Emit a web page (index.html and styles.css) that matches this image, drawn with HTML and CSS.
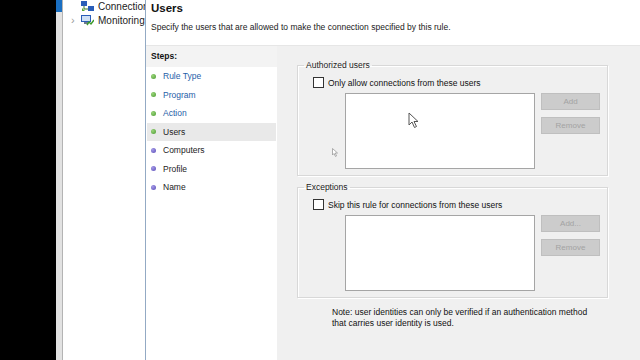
FILE: index.html
```html
<!DOCTYPE html>
<html lang="en">
<head>
  <meta charset="UTF-8" />
  <title>New Inbound Rule Wizard - Users</title>
  <link rel="stylesheet" href="styles.css">
</head>
<body>
  <div class="screen">
    <div class="black"></div>
    <div class="strip"><div class="strip-top"></div></div>

    <!-- MMC tree behind the wizard -->
    <div class="tree">
      <div class="tree-row">
        <span class="chev"></span>
        <svg class="tree-icon" width="13" height="11" viewBox="0 0 13 11">
          <rect x="0" y="0" width="6" height="5" fill="#2a5db8"/>
          <rect x="7" y="5" width="6" height="5" fill="#2a5db8"/>
          <path d="M3 5 V8 H7" stroke="#3a7a2a" stroke-width="1" fill="none"/>
          <path d="M1 7 L4 10 L1 10 Z" fill="#56a832"/>
        </svg>
        <span class="tree-label">Connection</span>
      </div>
      <div class="tree-row">
        <span class="chev">&#x203A;</span>
        <svg class="tree-icon" width="13" height="11" viewBox="0 0 13 11">
          <rect x="0" y="0" width="10" height="7" fill="#2a5db8"/>
          <rect x="1" y="1" width="8" height="5" fill="#cfe0f5"/>
          <rect x="3" y="7" width="4" height="2" fill="#6b7a8c"/>
          <path d="M6 10 L8 7 L10 9 L13 5" stroke="#3b9a2a" stroke-width="1.4" fill="none"/>
        </svg>
        <span class="tree-label">Monitoring</span>
      </div>
    </div>

    <!-- Wizard dialog -->
    <div class="dialog">
      <div class="dlg-head">
        <h1>Users</h1>
        <p>Specify the users that are allowed to make the connection specified by this rule.</p>
      </div>
      <div class="dlg-body">
        <div class="steps">
          <div class="steps-title">Steps:</div>
          <ul class="step-list">
            <li class="done"><span class="dot green"></span>Rule Type</li>
            <li class="done"><span class="dot green"></span>Program</li>
            <li class="done"><span class="dot green"></span>Action</li>
            <li class="current"><span class="dot green"></span>Users</li>
            <li><span class="dot purple"></span>Computers</li>
            <li><span class="dot purple"></span>Profile</li>
            <li><span class="dot purple"></span>Name</li>
          </ul>
        </div>

        <div class="content">
          <fieldset class="group">
            <legend>Authorized users</legend>
            <label class="check-row"><span class="box"></span>Only allow connections from these users</label>
            <div class="list-row">
              <div class="listbox"></div>
              <div class="btn-col">
                <button class="btn" disabled>Add</button>
                <button class="btn" disabled>Remove</button>
              </div>
            </div>
          </fieldset>

          <fieldset class="group second">
            <legend>Exceptions</legend>
            <label class="check-row"><span class="box"></span>Skip this rule for connections from these users</label>
            <div class="list-row">
              <div class="listbox"></div>
              <div class="btn-col">
                <button class="btn" disabled>Add...</button>
                <button class="btn" disabled>Remove</button>
              </div>
            </div>
          </fieldset>

          <p class="note">Note: user identities can only be verified if an authentication method<br>that carries user identity is used.</p>
        </div>
      </div>
    </div>

    <!-- mouse pointers -->
    <svg class="cursor big" width="13" height="17" viewBox="0 0 13 17">
      <path d="M1 1 L1 13 L4 10 L6.5 15.5 L8.5 14.5 L6 9.5 L10 9.5 Z" fill="#fff" stroke="#555" stroke-width="1"/>
    </svg>
    <svg class="cursor small" width="7" height="9" viewBox="0 0 7 9">
      <path d="M0.5 0.5 L0.5 7 L2 5.5 L3.5 8.5 L4.5 8 L3.2 5 L5.5 5 Z" fill="#fff" stroke="#9a9a9a" stroke-width="0.8"/>
    </svg>
  </div>
</body>
</html>
```

FILE: styles.css
```css
* { margin: 0; padding: 0; box-sizing: border-box; }
body { background: #000; font-family: "Liberation Sans", Arial, sans-serif; }
.screen {
  position: relative;
  width: 640px;
  height: 360px;
  display: flex;
  overflow: hidden;
}
.black { width: 56px; flex: none; background: #000; }
.strip {
  width: 7px;
  flex: none;
  background: #e2e2e2;
  border-right: 1px solid #b4b4b4;
}
.strip-top { height: 12px; background: #1a6fc2; }

.tree {
  width: 82px;
  flex: none;
  background: #fff;
  overflow: hidden;
  white-space: nowrap;
}
.tree-row {
  display: flex;
  align-items: center;
  height: 14px;
  font-size: 10px;
  color: #222;
}
.tree-row:first-child { margin-top: -1px; }
.chev {
  flex: none;
  width: 10px;
  margin-left: 8px;
  color: #9a9a9a;
  font-size: 11px;
  line-height: 10px;
}
.tree-icon { margin-right: 4px; flex: none; }
.tree-label { flex: none; }

.dialog {
  flex: 1;
  display: flex;
  flex-direction: column;
  background: #f0f0f0;
  border-left: 1px solid #93aac4;
}
.dlg-head {
  height: 46px;
  background: #fff;
  padding: 1px 0 0 5px;
  border-bottom: 1px solid #e6e6e6;
}
.dlg-head h1 { font-size: 11.5px; font-weight: bold; color: #111; line-height: 14px; }
.dlg-head p { font-size: 8.5px; color: #222; margin-top: 7px; }

.dlg-body { flex: 1; display: flex; }
.steps { width: 131px; background: #fff; }
.steps-title {
  height: 21px;
  background: #f3f3f3;
  font-size: 8.5px;
  font-weight: bold;
  color: #111;
  padding: 5px 0 0 5px;
}
.step-list { list-style: none; }
.step-list li {
  height: 18.5px;
  display: flex;
  align-items: center;
  font-size: 8.5px;
  color: #222;
  padding-left: 5px;
}
.step-list li.done { color: #1f5ea8; }
.step-list li.current { background: #e9e9e9; margin: 0 1px; padding-left: 4px; }
.dot {
  width: 5px;
  height: 5px;
  border-radius: 50%;
  margin-right: 7px;
}
.dot.green { background: radial-gradient(circle at 35% 35%, #9ad57a, #4a9a30); }
.dot.purple { background: radial-gradient(circle at 35% 35%, #a49ae6, #5a4cb8); }

.content { flex: 1; padding: 14px 32px 0 20px; }
.group {
  border: 1px solid #d8d8d8;
  box-shadow: 1px 1px 0 #fff, inset 1px 1px 0 #fff;
  padding: 7px 0 6px 0;
}
.group.second { margin-top: 6px; }
.group legend {
  font-size: 8.5px;
  line-height: 10px;
  color: #222;
  margin-left: 6px;
  padding: 0 2px;
}
.check-row {
  display: flex;
  align-items: center;
  height: 11px;
  margin-left: 15px;
  font-size: 8.5px;
  color: #111;
}
.box {
  width: 11px;
  height: 11px;
  border: 1px solid #333;
  background: #fff;
  margin-right: 4px;
}
.list-row { display: flex; gap: 6px; margin: 5px 0 0 47px; }
.listbox {
  width: 190px;
  height: 76px;
  background: #fff;
  border: 1px solid #a5a5a5;
}
.btn-col { display: flex; flex-direction: column; gap: 7px; }
.btn {
  width: 59px;
  height: 17px;
  background: #cccccc;
  border: 1px solid #bfbfbf;
  color: #a3a3a3;
  font-family: "Liberation Sans", Arial, sans-serif;
  font-size: 8px;
}
.note {
  margin: 9px 0 0 35px;
  font-size: 8.5px;
  line-height: 11px;
  color: #111;
}

.cursor { position: absolute; }
.cursor.big { left: 408px; top: 112px; }
.cursor.small { left: 332px; top: 148px; }
```
